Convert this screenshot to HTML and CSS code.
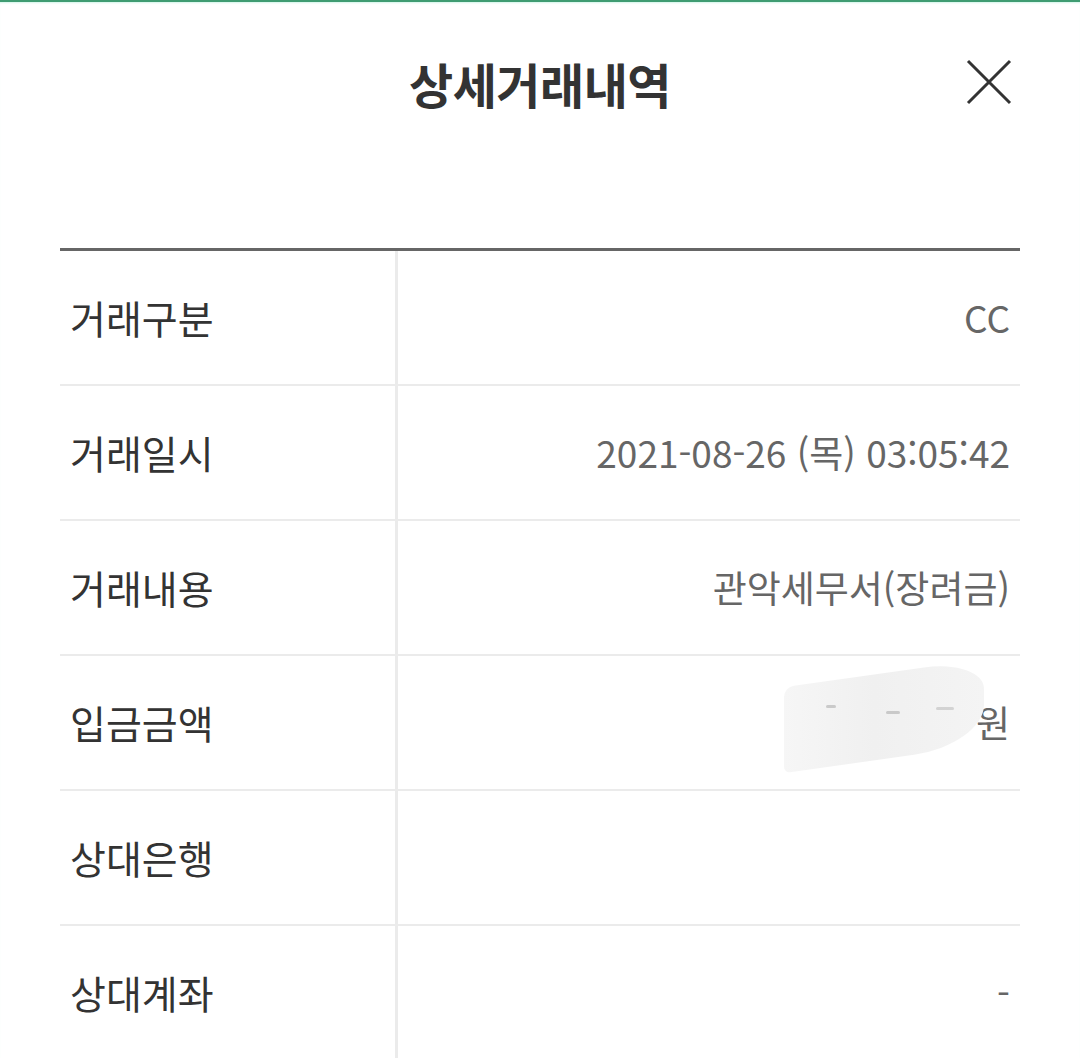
FILE: index.html
```html
<!DOCTYPE html>
<html lang="ko">
<head>
    <meta charset="UTF-8">
    <meta name="viewport" content="width=device-width, initial-scale=1.0">
    <title>상세거래내역</title>
    <link rel="stylesheet" href="styles.css">
</head>
<body>
    <div class="popup">
        <div class="header">
            <span></span>
            <h1 class="title">상세거래내역</h1>
            <button class="close" type="button" aria-label="닫기">
                <svg width="46" height="46" viewBox="0 0 46 46">
                    <path d="M2 2 L44 44 M44 2 L2 44" stroke="#333" stroke-width="3" fill="none"/>
                </svg>
            </button>
        </div>

        <div class="detail">
            <div class="row">
                <div class="label">거래구분</div>
                <div class="value">CC</div>
            </div>
            <div class="row">
                <div class="label">거래일시</div>
                <div class="value">2021-08-26 (목) 03:05:42</div>
            </div>
            <div class="row">
                <div class="label">거래내용</div>
                <div class="value">관악세무서(장려금)</div>
            </div>
            <div class="row">
                <div class="label">입금금액</div>
                <div class="value"><span class="masked"><i class="mark m1"></i><i class="mark m2"></i><i class="mark m3"></i></span>원</div>
            </div>
            <div class="row">
                <div class="label">상대은행</div>
                <div class="value"></div>
            </div>
            <div class="row">
                <div class="label">상대계좌</div>
                <div class="value">-</div>
            </div>
        </div>
    </div>
</body>
</html>
```

FILE: styles.css
```css
* {
    box-sizing: border-box;
}

html, body {
    margin: 0;
    height: 100%;
    overflow: hidden;
}

body {
    font-family: "Noto Sans CJK KR", "Noto Sans", sans-serif;
    background: #fff;
    color: #333;
}

.popup {
    border-top: 2px solid #3f9c72;
    box-shadow: inset 0 2px 2px -1px rgba(80, 220, 170, 0.25);
}

.header {
    height: 162px;
    padding: 0 68px;
    display: grid;
    grid-template-columns: 1fr auto 1fr;
    align-items: center;
}

.title {
    margin: 0;
    font-size: 48px;
    font-weight: 700;
    color: #333;
    letter-spacing: -0.5px;
}

.close {
    justify-self: end;
    width: 46px;
    height: 46px;
    padding: 0;
    border: 0;
    background: none;
    margin-top: -2px;
}

.close svg {
    display: block;
}

.detail {
    margin: 84px 60px 0;
    border-top: 3px solid #666;
}

.row {
    display: grid;
    grid-template-columns: 338px 1fr;
    height: 135px;
    border-bottom: 2px solid #ebebeb;
}

.label,
.value {
    display: flex;
    align-items: center;
    line-height: 1.4;
}

.label {
    padding-left: 10px;
    border-right: 3px solid #ebebeb;
    font-size: 39px;
    color: #333;
}

.value {
    justify-content: flex-end;
    padding-right: 10px;
    font-size: 37px;
    color: #666;
}

.masked {
    position: relative;
    display: inline-block;
    width: 190px;
    height: 40px;
}

.masked::before {
    content: "";
    position: absolute;
    left: -2px;
    top: -30px;
    width: 200px;
    height: 86px;
    background: linear-gradient(90deg, #f6f6f6, #f0f0f0 45%, #f4f4f4);
    border-radius: 10px 60px 70px 6px / 10px 30px 40px 6px;
    transform: skewY(-8deg);
}

.mark {
    position: absolute;
    height: 3px;
    background: #999;
    border-radius: 2px;
    opacity: 0.45;
}

.m1 { left: 40px; top: 2px; width: 10px; }
.m2 { left: 100px; top: 8px; width: 14px; }
.m3 { left: 150px; top: 4px; width: 18px; opacity: 0.35; }
```
